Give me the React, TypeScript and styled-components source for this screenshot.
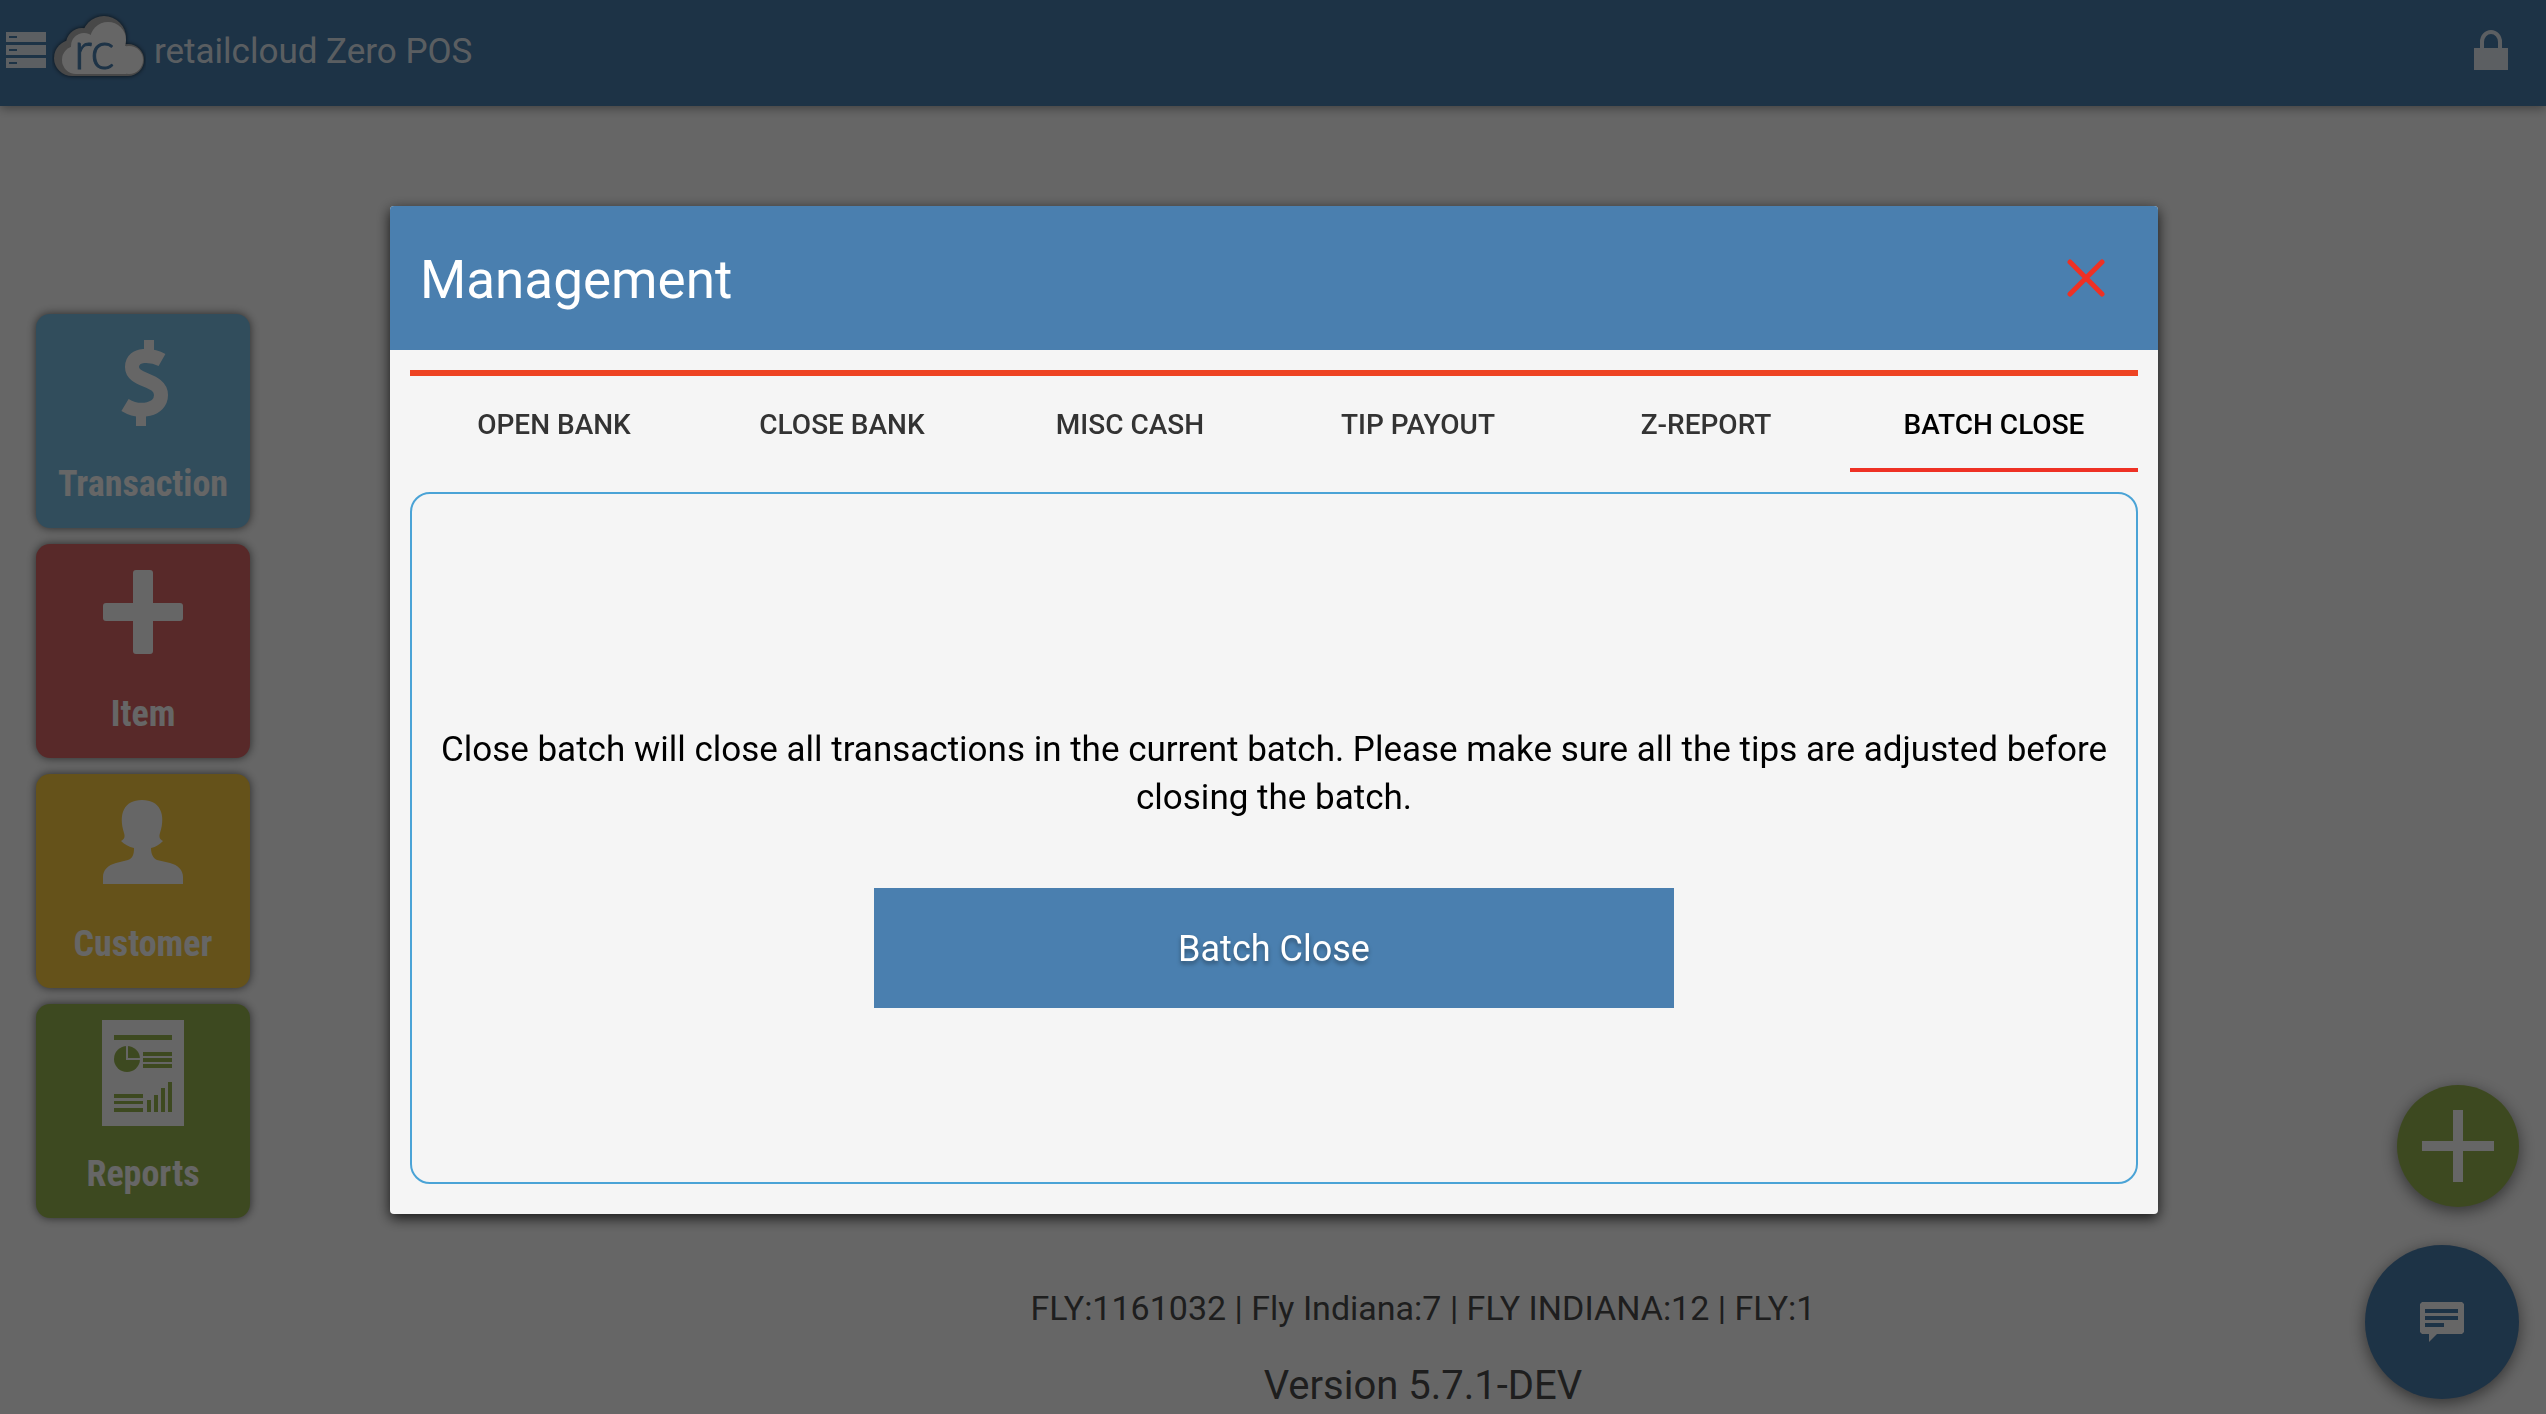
import React, { useState } from "react";
import styled, { createGlobalStyle } from "styled-components";

const blue = "#4a7faf";

const GlobalStyle = createGlobalStyle`
  * { box-sizing: border-box; }
  html, body, #root { height: 100%; }
  body {
    margin: 0;
    background: #fff;
    color: #000;
    font-family: Roboto, "Liberation Sans", sans-serif;
    overflow: hidden;
  }
  button {
    margin: 0;
    padding: 0;
    border: 0;
    background: none;
    color: inherit;
    font: inherit;
    cursor: pointer;
  }
  svg { display: block; }
`;

const Page = styled.div`
  display: flex;
  flex-direction: column;
  min-height: 100vh;
`;

const TopBar = styled.header`
  display: flex;
  align-items: center;
  gap: 6px;
  height: 106px;
  padding: 0 38px 6px 6px;
  background: ${blue};
  color: rgba(255, 255, 255, 0.87);
  box-shadow: 0 2px 10px rgba(0, 0, 0, 0.4);
`;

const Brand = styled.h1`
  flex: 1;
  margin: 0;
  padding: 4px 0 0 2px;
  font-size: 35px;
  line-height: 48px;
  font-weight: 400;
`;

const Workspace = styled.div`
  display: flex;
  flex: 1;
`;

const Sidebar = styled.nav`
  display: flex;
  flex-direction: column;
  gap: 16px;
  width: 300px;
  padding: 208px 50px 0 36px;
`;

const Tile = styled.button<{ $color: string }>`
  display: flex;
  flex-direction: column;
  align-items: center;
  justify-content: space-between;
  height: 214px;
  padding: 16px 0 20px;
  border-radius: 14px;
  background: ${(p) => p.$color};
  color: #fff;
  box-shadow: 0 0 10px rgba(0, 0, 0, 0.6);
  font-family: "Roboto Condensed", Roboto, sans-serif;
  font-size: 36px;
  line-height: 48px;
  font-weight: 700;
`;

const Main = styled.main`
  display: flex;
  flex: 1;
  flex-direction: column;
  align-items: center;
  justify-content: flex-end;
  gap: 26px;
  color: #4d4d4d;
`;

const StoreInfo = styled.p`
  margin: 0;
  font-size: 34px;
  line-height: 48px;
`;

const Version = styled.p`
  margin: 0;
  font-size: 40px;
  line-height: 56px;
`;

const FloatingActions = styled.div`
  position: fixed;
  right: 27px;
  bottom: 15px;
  display: flex;
  flex-direction: column;
  align-items: flex-end;
  gap: 38px;
`;

const RoundButton = styled.button<{ $size: number; $color: string }>`
  display: grid;
  place-items: center;
  width: ${(p) => p.$size}px;
  height: ${(p) => p.$size}px;
  border-radius: 50%;
  background: ${(p) => p.$color};
  color: #fff;
  box-shadow: 0 4px 16px rgba(0, 0, 0, 0.5);
`;

const Backdrop = styled.div`
  position: fixed;
  inset: 0;
  display: flex;
  padding: 206px 388px 200px 390px;
  background: rgba(0, 0, 0, 0.6);
`;

const Dialog = styled.section`
  display: flex;
  flex: 1;
  flex-direction: column;
  border-radius: 4px;
  overflow: hidden;
  background: #f5f5f5;
  box-shadow: 0 4px 14px rgba(0, 0, 0, 0.8);
`;

const DialogHeader = styled.header`
  display: flex;
  align-items: center;
  justify-content: space-between;
  height: 144px;
  padding: 0 48px 0 30px;
  background: ${blue};
  color: #fff;
`;

const DialogTitle = styled.h2`
  margin: 0;
  padding-top: 4px;
  font-size: 53px;
  line-height: 64px;
  font-weight: 400;
`;

const CloseButton = styled.button`
  display: grid;
  place-items: center;
  width: 48px;
  height: 48px;
  color: #ee3124;
`;

const DialogBody = styled.div`
  display: flex;
  flex: 1;
  flex-direction: column;
  gap: 20px;
  padding: 20px 20px 30px;
`;

const TabList = styled.div`
  display: grid;
  grid-template-columns: repeat(6, 1fr);
  border-top: 6px solid #ee4423;
`;

const Tab = styled.button<{ $active: boolean }>`
  height: 96px;
  padding-top: 6px;
  border-bottom: 4px solid ${(p) => (p.$active ? "#ee3124" : "transparent")};
  color: ${(p) => (p.$active ? "#000" : "#333")};
  font-size: 28px;
  line-height: 40px;
  font-weight: 500;
`;

const Panel = styled.div`
  display: flex;
  flex: 1;
  flex-direction: column;
  align-items: center;
  justify-content: center;
  gap: 66px;
  padding: 58px 24px 0;
  border: 2px solid #4aa3d6;
  border-radius: 20px;
`;

const Message = styled.p`
  margin: 0;
  font-size: 35px;
  line-height: 48px;
  text-align: center;
`;

const PrimaryButton = styled.button`
  width: 800px;
  max-width: 100%;
  height: 120px;
  padding-top: 2px;
  background: ${blue};
  color: #fff;
  font-size: 36px;
  line-height: 48px;
  text-shadow: 0 3px 4px rgba(0, 0, 0, 0.35);
`;

const MenuIcon = () => (
  <svg width="40" height="36" viewBox="0 0 40 36" fill="currentColor" aria-hidden="true">
    <path fillRule="evenodd" d="M0 0h40v10H0zM3 4v2h8V4zM0 13h40v10H0zM3 17v2h8v-2zM0 26h40v10H0zM3 30v2h8v-2z" />
  </svg>
);

const CloudShadow = styled.g`
  filter: drop-shadow(0 0 2px rgba(0, 0, 0, 0.7));
`;

const CloudLogo = () => (
  <svg width="94" height="74" viewBox="52 13 94 74" role="img" aria-label="retailcloud">
    <CloudShadow fill="#b4b4b4">
      <circle cx="72" cy="58" r="18" />
      <circle cx="82" cy="44" r="16" />
      <circle cx="104" cy="38" r="22" />
      <circle cx="128" cy="60" r="16" />
      <path d="M72 50h56v26H72z" />
    </CloudShadow>
    <g fill="#fff">
      <circle cx="76" cy="60" r="14" />
      <circle cx="84" cy="46" r="13" />
      <circle cx="108" cy="40" r="18" />
      <circle cx="129" cy="60" r="14" />
      <path d="M76 46h50v28H76z" />
    </g>
    <text x="74" y="69" fontFamily="Lato, sans-serif" fontSize="51" fontWeight="300" fill={blue} stroke={blue}>
      rc
    </text>
  </svg>
);

const LockIcon = () => (
  <svg width="34" height="40" viewBox="0 0 34 40" aria-hidden="true">
    <path d="M0 18h34v22H0z" fill="currentColor" />
    <path d="M8 18v-6a9 10 0 0 1 18 0v6" fill="none" stroke="currentColor" strokeWidth="4" />
  </svg>
);

const DollarIcon = () => (
  <svg width="80" height="104" viewBox="0 0 80 104" aria-hidden="true">
    <g fill="none" stroke="#fff">
      <path d="M59 30C50 25 29 22 29 37C29 52 58 48 58 65C58 80 37 84 22 75" strokeWidth="14" />
      <path d="M46 10v14M38 82v14" strokeWidth="10" />
    </g>
  </svg>
);

const PlusIcon = () => (
  <svg width="80" height="104" viewBox="0 0 80 104" fill="#fff" aria-hidden="true">
    <rect x="30" y="10" width="20" height="84" rx="3" />
    <rect x="0" y="43" width="80" height="18" rx="3" />
  </svg>
);

const PersonIcon = () => (
  <svg width="80" height="104" viewBox="0 0 80 104" fill="#fff" aria-hidden="true">
    <path d="M0 94V87C0 80 5 75 13 73L25 70C30 68 31 64 31 58C26 57 21 54 18 51C22 49 22 46 21 43C15 24 21 10 39 10C57 10 63 24 57 43C56 46 56 49 60 51C57 54 53 57 48 58C48 64 50 68 54 70L67 73C75 75 80 80 80 87V94Z" />
  </svg>
);

const ReportIcon = () => (
  <svg width="82" height="106" viewBox="0 0 82 106" aria-hidden="true">
    <path d="M0 0h82v106H0z" fill="#fff" />
    <g fill="#9ab751">
      <path d="M12 15h58v5H12zM41 32h29v4H41zM41 38h29v4H41zM41 44h29v4H41zM12 74h29v4H12zM12 81h29v3H12zM12 88h29v4H12z" />
      <path d="M45 80h4v12h-4zM52 75h4v17h-4zM59 68h4v24h-4zM66 62h4v30h-4z" />
      <circle cx="25" cy="39" r="13" />
    </g>
    <path d="M25 26v13h13" fill="none" stroke="#fff" strokeWidth="2" />
  </svg>
);

const AddIcon = () => (
  <svg width="72" height="72" viewBox="0 0 72 72" fill="currentColor" aria-hidden="true">
    <path d="M31 0h10v31h31v10H41v31H31V41H0V31h31z" />
  </svg>
);

const ChatIcon = () => (
  <svg width="44" height="40" viewBox="0 0 44 40" fill="currentColor" aria-hidden="true">
    <path fillRule="evenodd" d="M2 0h40l2 2v28l-2 2H17l-8 8v-8H2l-2-2V2zM5 7v4h33V7zM5 14v4h33v-4zM5 21v4h19v-4z" />
  </svg>
);

const CrossIcon = () => (
  <svg width="38" height="38" viewBox="0 0 38 38" aria-hidden="true">
    <path d="M3 3l32 32M35 3L3 35" stroke="currentColor" strokeWidth="5" strokeLinecap="round" />
  </svg>
);

const tiles = [
  { label: "Transaction", color: "#7bc0e7", Icon: DollarIcon },
  { label: "Item", color: "#dd6666", Icon: PlusIcon },
  { label: "Customer", color: "#fccd43", Icon: PersonIcon },
  { label: "Reports", color: "#9ab751", Icon: ReportIcon },
];

const tabs = ["OPEN BANK", "CLOSE BANK", "MISC CASH", "TIP PAYOUT", "Z-REPORT", "BATCH CLOSE"];

export default function App() {
  const [active, setActive] = useState("BATCH CLOSE");

  return (
    <>
      <GlobalStyle />
      <Page>
        <TopBar>
          <button aria-label="Menu">
            <MenuIcon />
          </button>
          <CloudLogo />
          <Brand>retailcloud Zero POS</Brand>
          <button aria-label="Lock">
            <LockIcon />
          </button>
        </TopBar>
        <Workspace>
          <Sidebar>
            {tiles.map(({ label, color, Icon }) => (
              <Tile key={label} $color={color}>
                <Icon />
                {label}
              </Tile>
            ))}
          </Sidebar>
          <Main>
            <StoreInfo>FLY:1161032 | Fly Indiana:7 | FLY INDIANA:12 | FLY:1</StoreInfo>
            <Version>Version 5.7.1-DEV</Version>
          </Main>
        </Workspace>
        <FloatingActions>
          <RoundButton $size={122} $color="#9ab751" aria-label="Add">
            <AddIcon />
          </RoundButton>
          <RoundButton $size={154} $color={blue} aria-label="Messages">
            <ChatIcon />
          </RoundButton>
        </FloatingActions>
      </Page>
      <Backdrop>
        <Dialog role="dialog" aria-modal="true" aria-labelledby="dialog-title">
          <DialogHeader>
            <DialogTitle id="dialog-title">Management</DialogTitle>
            <CloseButton aria-label="Close">
              <CrossIcon />
            </CloseButton>
          </DialogHeader>
          <DialogBody>
            <TabList role="tablist">
              {tabs.map((name) => (
                <Tab
                  key={name}
                  role="tab"
                  aria-selected={name === active}
                  $active={name === active}
                  onClick={() => setActive(name)}
                >
                  {name}
                </Tab>
              ))}
            </TabList>
            <Panel role="tabpanel">
              <Message>
                Close batch will close all transactions in the current batch. Please make sure all the tips are
                adjusted before closing the batch.
              </Message>
              <PrimaryButton>Batch Close</PrimaryButton>
            </Panel>
          </DialogBody>
        </Dialog>
      </Backdrop>
    </>
  );
}
